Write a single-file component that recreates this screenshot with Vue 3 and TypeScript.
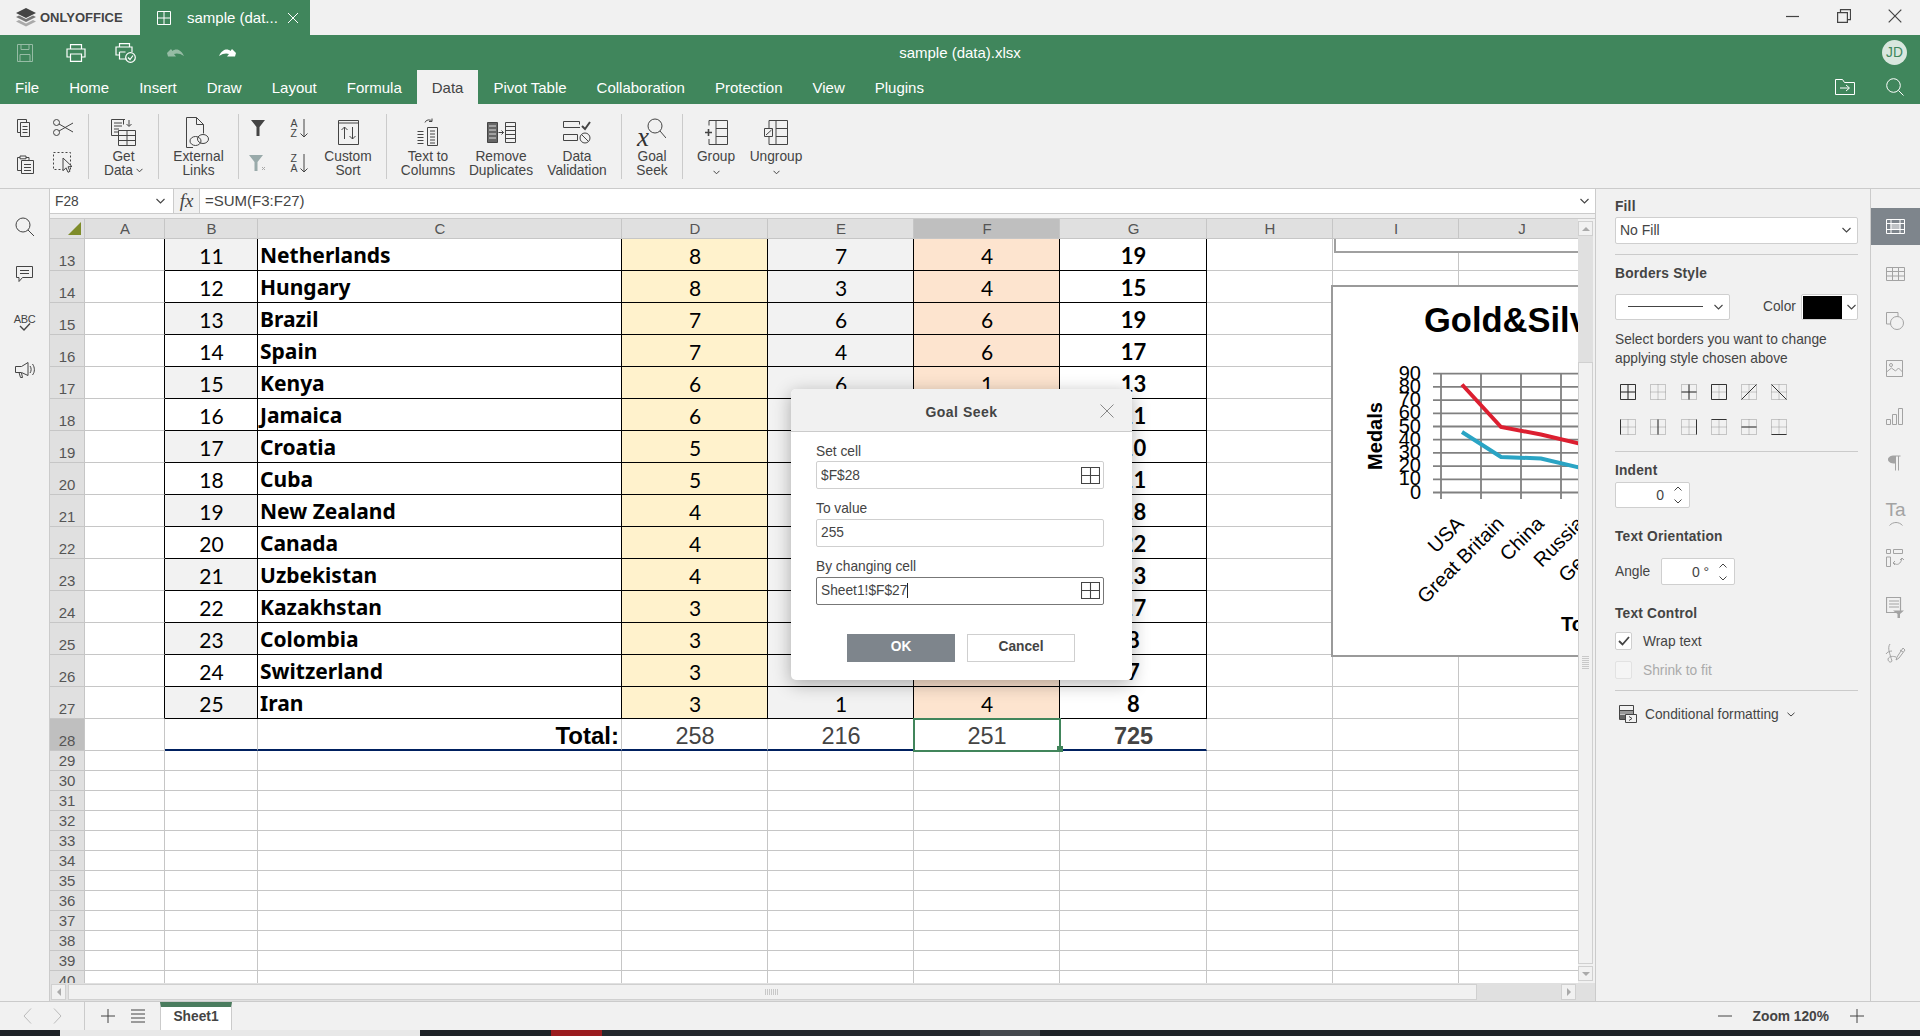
<script setup lang="ts">
interface Row { n: number; rank: number; name: string; d: number; e: number; f: number; g: number }
const names: [string, number, number, number][] = [
  ['Netherlands', 8, 7, 4], ['Hungary', 8, 3, 4], ['Brazil', 7, 6, 6], ['Spain', 7, 4, 6], ['Kenya', 6, 6, 1],
  ['Jamaica', 6, 3, 2], ['Croatia', 5, 3, 2], ['Cuba', 5, 2, 4], ['New Zealand', 4, 9, 5], ['Canada', 4, 3, 15],
  ['Uzbekistan', 4, 2, 7], ['Kazakhstan', 3, 5, 9], ['Colombia', 3, 2, 3], ['Switzerland', 3, 2, 2], ['Iran', 3, 1, 4],
]
const rows: Row[] = names.map((x, i) => ({ n: 13 + i, rank: 11 + i, name: x[0], d: x[1], e: x[2], f: x[3], g: x[1] + x[2] + x[3] }))
const cols = ['A', 'B', 'C', 'D', 'E', 'F', 'G', 'H', 'I', 'J']
const emptyRows = [29, 30, 31, 32, 33, 34, 35, 36, 37, 38, 39, 40]
const menu = ['File', 'Home', 'Insert', 'Draw', 'Layout', 'Formula', 'Data', 'Pivot Table', 'Collaboration', 'Protection', 'View', 'Plugins']
const borderIcons = [
  'M.5.5h15v15H.5zM8 .5v15M.5 8h15', '', 'M8 .5v15M.5 8h15', 'M.5.5h15v15H.5z', 'M.5 15.5l15-15', 'M.5.5l15 15',
  'M.5.5v15', 'M8 .5v15', 'M15.5.5v15', 'M.5.5h15', 'M.5 8h15', 'M.5 15.5h15',
]
const axis = [90, 80, 70, 60, 50, 40, 30, 20, 10, 0]
const axisY = (i: number) => 372.7 + i * 13.2
const countries = ['USA', 'Great Britain', 'China', 'Russia', 'Germany']
</script>

<template>
  <div class="app">
    <!-- title bar -->
    <div class="titlebar">
      <div class="brand">
        <svg class="logo" width="20" height="19" viewBox="0 0 20 19">
          <path d="M10 0l10 5-10 5L0 5z" fill="#444" />
          <path d="M0 9l3-1.5 7 3.5 7-3.5 3 1.5-10 5z" fill="#777" />
          <path d="M0 13.5L3 12l7 3.5 7-3.5 3 1.5-10 5z" fill="#aaa" />
        </svg>
        <span class="brand-text">ONLYOFFICE</span>
      </div>
      <div class="doc-tab">
        <svg width="14" height="14" viewBox="0 0 14 14" fill="none" stroke="#fff"><path d="M.5.5h13v13H.5zM7 .5v13M.5 7h13" /></svg>
        <span class="doc-tab-name">sample (dat...</span>
        <svg width="12" height="12" viewBox="0 0 12 12" fill="none" stroke="#fff"><path d="M1 1l10 10M11 1L1 11" /></svg>
      </div>
      <div class="spacer"></div>
      <div class="win">
        <svg width="14" height="14" viewBox="0 0 14 14" stroke="#444" fill="none"><path d="M0 7.5h13" stroke-width="1.2" /></svg>
        <svg width="14" height="14" viewBox="0 0 14 14" stroke="#444" fill="none" stroke-width="1.2"><path d="M.6 3.6h9.8v9.8H.6zM3.5 3.5V.6h10v10h-3" /></svg>
        <svg width="14" height="14" viewBox="0 0 14 14" stroke="#444" fill="none" stroke-width="1.2"><path d="M.7.7l12.6 12.6M13.3.7L.7 13.3" /></svg>
      </div>
    </div>

    <!-- green header -->
    <div class="header">
      <div class="quick">
        <div class="quick-icons">
          <svg class="dim" width="16" height="18" viewBox="0 0 16 18" fill="none" stroke="#fff"><path d="M.5.5h15v17H.5zM4 .5v5h8v-5M3 17.5v-7h10v7" /></svg>
          <svg width="20" height="18" viewBox="0 0 20 18" fill="none" stroke="#fff" stroke-width="1.2"><path d="M4.5 5V.6h11V5M4.5 13H1V5h18v8h-3.500M4.500 10h11v7.400h-11z" /></svg>
          <svg width="21" height="20" viewBox="0 0 21 20" fill="none" stroke="#fff" stroke-width="1.2"><path d="M4.500 4V.6h10V4M4.500 12H1V4h16v5M4.500 9h6M4.500 9v7h7" /><circle cx="15.500" cy="14.500" r="4.800" /><path d="M13 14.500l2 2 3-4" /></svg>
          <svg class="dim" width="18" height="10" viewBox="0 0 18 10" fill="#fff"><path d="M0 5l4-4 1.500 2C8 1 13 0 17 8 13 5 9 5 7 6l2 2.500H1z" /></svg>
          <svg width="18" height="10" viewBox="0 0 18 10" fill="#fff"><path d="M18 5l-4-4-1.500 2C10 1 5 0 1 8c4-3 8-3 10-2L9 8.500h8z" /></svg>
        </div>
        <div class="doc-title">sample (data).xlsx</div>
        <div class="avatar">JD</div>
      </div>
      <div class="menu">
        <div v-for="m in menu" :key="m" class="menu-item" :class="{ active: m === 'Data' }">{{ m }}</div>
        <div class="spacer"></div>
        <svg class="menu-folder" width="20" height="16" viewBox="0 0 20 16" fill="none" stroke="#fff"><path d="M.5 15.500V.5h7l2 3h10v12zM5 9h9M11 6l3.500 3L11 12" /></svg>
        <svg class="menu-search" width="18" height="18" viewBox="0 0 18 18" fill="none" stroke="#fff"><circle cx="7.500" cy="7.500" r="6.800" /><path d="M12.500 12.500l5 5" /></svg>
      </div>
    </div>

    <!-- toolbar -->
    <div class="toolbar">
      <div class="tg g1">
        <div class="small-col">
          <svg width="17" height="18" viewBox="0 0 17 18" fill="none" stroke="#444"><path d="M3.500 13.500H.5V.5h9v3M3.500 3.500h9v14h-9zM5.500 7.500h5M5.500 10.500h5M5.500 13.500h5" /></svg>
          <svg width="17" height="19" viewBox="0 0 17 19" fill="none" stroke="#444"><path d="M4 15.500H.5V2.500H3M9 2.500h3V5M4.500 5.500h12v13h-12zM3 1h6v2.800H3zM7 9.500h7M7 12.500h7M7 15.500h7" /></svg>
        </div>
        <div class="small-col c2">
          <svg width="20" height="17" viewBox="0 0 20 17" fill="none" stroke="#444"><circle cx="3.500" cy="3.500" r="3" /><circle cx="3.500" cy="13.500" r="3" /><path d="M6 5l14 8M6 12L20 4" /></svg>
          <svg width="20" height="22" viewBox="0 0 20 22" fill="none" stroke="#444"><path d="M.5.5h17v17H.5z" stroke-dasharray="2 2" /><path d="M10 6l9 8.500-4 .3 2 4.500-2 1-2-4.500-3 3z" fill="#f1f1f1" /></svg>
        </div>
      </div>
      <div class="tg g2">
        <div class="big">
          <div class="ic">
            <svg width="25" height="27" viewBox="0 0 25 27" fill="none" stroke="#444"><path d="M8.500 16.500h-8V.5h12v5M3 4h8M3 7h8M3 10h5M3 13h5M18 1v6M15.500 5L18 7.500 20.500 5M10 .5h4" /><path d="M7.500 11.500h17v15h-17zM7.500 16.500h17M7.500 21.500h17M16 11.500v15" /></svg>
          </div>
          <div class="lbl">Get<br />Data<span class="chev-in"><svg width="7" height="5" viewBox="0 0 7 5" fill="none" stroke="#444"><path d="M.5.8L3.500 3.800 6.500.8" /></svg></span></div>
        </div>
      </div>
      <div class="tg g3">
        <div class="big">
          <div class="ic">
            <svg width="24" height="31" viewBox="0 0 24 31" fill="none" stroke="#444"><path d="M7 30.500H.5V.5h10l7 7v9M10.500.5v7h7" /><ellipse cx="9.500" cy="24" rx="5.500" ry="4.500" /><ellipse cx="17" cy="22" rx="5.500" ry="4.500" /></svg>
          </div>
          <div class="lbl">External<br />Links</div>
        </div>
      </div>
      <div class="tg g4">
        <div class="small-col sc-f">
          <svg width="14" height="16" viewBox="0 0 14 16" fill="#444"><path d="M0 0h14L8.500 7v9h-3V7z" /></svg>
          <svg width="18" height="16" viewBox="0 0 18 16" fill="#9aa"><path d="M0 0h14L8.500 7v9h-3V7z" /><path d="M13 12l3 3M16 12l-3 3" stroke="#aaa" fill="none" /></svg>
        </div>
        <div class="small-col sc-s">
          <div class="sort"><div class="az"><span>A</span><span>Z</span></div><svg width="8" height="19" viewBox="0 0 8 19" fill="none" stroke="#444"><path d="M4 0v18M.5 14.500L4 18l3.500-3.500" /></svg></div>
          <div class="sort"><div class="az"><span>Z</span><span>A</span></div><svg width="8" height="19" viewBox="0 0 8 19" fill="none" stroke="#444"><path d="M4 0v18M.5 14.500L4 18l3.500-3.500" /></svg></div>
        </div>
        <div class="big w-sort">
          <div class="ic">
            <svg width="21" height="25" viewBox="0 0 21 25" fill="none" stroke="#444"><path d="M.5 3V24.500h20V.5H.5v2.500h20M6.500 19V7M3.500 10l3-3 3 3M14.500 7v12M11.500 16l3 3 3-3" /></svg>
          </div>
          <div class="lbl">Custom<br />Sort</div>
        </div>
      </div>
      <div class="tg g5">
        <div class="big w-ttc">
          <div class="ic">
            <svg width="22" height="28" viewBox="0 0 22 28" fill="none" stroke="#444"><path d="M8 4.500a4 4 0 0 1 7 -1M15 .5v3h-3M.5 13.500h6M.5 16.500h6M.5 19.500h6M.5 22.500h6M.5 25.500h6" /><path d="M10.500 9.500h10v18h-10zM13 13h5M13 16h5M13 19h5M13 22h5M13 25h5" /></svg>
          </div>
          <div class="lbl">Text to<br />Columns</div>
        </div>
        <div class="big w-rd">
          <div class="ic">
            <svg width="29" height="21" viewBox="0 0 29 21" fill="none" stroke="#444"><path d="M.5.5h10v20H.5z" fill="#666" /><path d="M2 4h7M2 8h7M2 12h7M2 16h7" stroke="#ddd" /><path d="M18.500.5h10v20h-10zM18.500 4.500h10M18.500 8.500h10M18.500 12.500h10M18.500 16.500h10M11.500 10.500h5M14.500 8.500l2 2-2 2" /></svg>
          </div>
          <div class="lbl">Remove<br />Duplicates</div>
        </div>
        <div class="big w-dv">
          <div class="ic">
            <svg width="28" height="23" viewBox="0 0 28 23" fill="none" stroke="#444"><path d="M17 6.500H.5v-6h16v3M.5 13.500h14v6H.5z" /><path d="M19 5l3 3 5-7" stroke-width="2" /><circle cx="22" cy="17" r="5" /><path d="M18.500 13.500l7 7" /></svg>
          </div>
          <div class="lbl">Data<br />Validation</div>
        </div>
      </div>
      <div class="tg g6">
        <div class="big">
          <div class="ic goal">
            <span class="goal-x">x</span>
            <svg width="20" height="22" viewBox="0 0 20 22" fill="none" stroke="#444"><circle cx="9" cy="8" r="7" /><path d="M14 13l6 7" /></svg>
          </div>
          <div class="lbl">Goal<br />Seek</div>
        </div>
      </div>
      <div class="tg g7">
        <div class="big w-grp">
          <div class="ic">
            <svg width="24" height="25" viewBox="0 0 24 25" fill="none" stroke="#444"><path d="M12 .5h11.500v24H12zM12 8.500h11.500M12 16.500h11.500M5 .5h7M5 24.500h7M5 .5v5M5 19v5.500" /><path d="M1 12.500h7M4.500 9v7" stroke-width="1.600" /></svg>
          </div>
          <div class="lbl">Group<div class="chev-line"><svg width="7" height="5" viewBox="0 0 7 5" fill="none" stroke="#444"><path d="M.5.8L3.500 3.800 6.500.8" /></svg></div></div>
        </div>
        <div class="big w-ung">
          <div class="ic">
            <svg width="24" height="25" viewBox="0 0 24 25" fill="none" stroke="#444"><path d="M12 .5h11.500v24H12zM12 8.500h11.500M12 16.500h11.500M5 .5h7M5 24.500h7M5 .5v8M5 16v8.500" /><path d="M.5 8.500h8v8h-8zM2 15L7.500 10" /></svg>
          </div>
          <div class="lbl">Ungroup<div class="chev-line"><svg width="7" height="5" viewBox="0 0 7 5" fill="none" stroke="#444"><path d="M.5.8L3.500 3.800 6.500.8" /></svg></div></div>
        </div>
      </div>
    </div>

    <!-- main -->
    <div class="main">
      <div class="left-strip">
        <svg width="20" height="20" viewBox="0 0 20 20" fill="none" stroke="#444"><circle cx="8" cy="8" r="7" /><path d="M13 13l6 6" /></svg>
        <svg class="ls2" width="18" height="17" viewBox="0 0 18 17" fill="none" stroke="#444"><path d="M.5.5h16v11H6.500L3 15.500v-4H.5zM4 4.500h9M4 7.500h9" /></svg>
        <div class="abc ls3"><span>ABC</span><svg width="12" height="9" viewBox="0 0 12 9" fill="none" stroke="#444" stroke-width="1.400"><path d="M1 3l4 4 6-6.500" /></svg></div>
        <svg class="ls4" width="20" height="16" viewBox="0 0 20 16" fill="none" stroke="#444"><path d="M.5 4.500h6L13 .5v13l-6.500-3H.5zM4 10.500l1.500 5h2L6.500 11M15 4c1.500 2 1.500 5 0 7M17.500 2c2.500 3.500 2.500 8 0 11" /></svg>
      </div>

      <div class="center">
        <div class="formula">
          <div class="namebox">
            <span>F28</span>
            <svg width="9" height="6" viewBox="0 0 9 6" fill="none" stroke="#444" stroke-width="1.100"><path d="M.5 1l4 4 4-4" /></svg>
          </div>
          <div class="fx">fx</div>
          <div class="finput">=SUM(F3:F27)</div>
          <svg class="fchev" width="9" height="6" viewBox="0 0 9 6" fill="none" stroke="#444" stroke-width="1.100"><path d="M.5 1l4 4 4-4" /></svg>
        </div>
        <div class="fgap"></div>
        <div class="sheet-row">
          <div class="sheet">
            <div class="grid">
              <div class="hd corner"><i class="tri"></i></div>
              <div v-for="c in cols" :key="c" class="hd col" :class="{ sel: c === 'F' }">{{ c }}</div>

              <template v-for="r in rows" :key="r.n">
                <div class="hd rowh tall">{{ r.n }}</div>
                <div class="cell bk-r"></div>
                <div class="cell tb num" :class="{ zebra: r.rank % 2 === 1 }">{{ r.rank }}</div>
                <div class="cell tb name">{{ r.name }}</div>
                <div class="cell tb num gold">{{ r.d }}</div>
                <div class="cell tb num zebra">{{ r.e }}</div>
                <div class="cell tb num bronze">{{ r.f }}</div>
                <div class="cell tb num strong">{{ r.g }}</div>
                <div class="cell"></div>
                <div class="cell"></div>
                <div class="cell"></div>
              </template>

              <div class="hd rowh tall sel">28</div>
              <div class="cell"></div>
              <div class="cell tot"></div>
              <div class="cell tot total-label">Total:</div>
              <div class="cell tot totnum">258</div>
              <div class="cell tot totnum">216</div>
              <div class="cell tot totnum active-cell">251<i class="handle"></i></div>
              <div class="cell tot totnum tbold">725</div>
              <div class="cell"></div>
              <div class="cell"></div>
              <div class="cell"></div>

              <template v-for="n in emptyRows" :key="n">
                <div class="hd rowh">{{ n }}</div>
                <div v-for="c in cols" :key="c" class="cell"></div>
              </template>
            </div>

            <div class="obj-top"></div>
            <div class="chart">
              <svg width="400" height="372" viewBox="1332 285 400 372">
                <text x="1424" y="331" class="c-title">Gold&amp;Silver</text>
                <text transform="rotate(-90 1382 435)" x="1382" y="435" text-anchor="middle" class="c-bold">Medals</text>
                <g stroke="#808080" stroke-width="1.800" fill="none">
                  <path v-for="(a, i) in axis" :key="a" :d="`M1433 ${axisY(i)}H1740`" />
                  <path d="M1441 372V498M1481 372V498M1521 372V498M1561 372V498M1601 372V498" />
                </g>
                <text v-for="(a, i) in axis" :key="'t' + a" :x="1421" :y="axisY(i) + 6" text-anchor="end" class="c-axis">{{ a }}</text>
                <path d="M1462 383.500L1501 426 1541 433.500 1581 443" fill="none" stroke="#dc1f30" stroke-width="4" />
                <path d="M1462 431L1501 456 1541 457.500 1581 467" fill="none" stroke="#2aa4c4" stroke-width="4" />
                <text v-for="(c, i) in countries" :key="c" :transform="`rotate(-45 ${1465 + i * 40} 524)`" :x="1465 + i * 40" y="524" text-anchor="end" class="c-axis">{{ c }}</text>
                <text x="1561" y="630" class="c-bold">Total</text>
              </svg>
            </div>
          </div>
          <div class="vscroll">
            <div class="sb-btn up"><i class="arr-up"></i></div>
            <div class="vtrack"></div>
            <div class="vthumb"><i class="vgrip"></i></div>
            <div class="sb-btn down"><i class="arr-down"></i></div>
          </div>
        </div>
        <div class="hscroll">
          <div class="sb-btn h"><i class="arr-left"></i></div>
          <div class="hthumb"><i class="hgrip"></i></div>
          <div class="htrack"></div>
          <div class="sb-btn h"><i class="arr-right"></i></div>
        </div>
      </div>

      <div class="panel">
        <div class="plabel mt9">Fill</div>
        <div class="pselect fill-sel mt1"><span>No Fill</span><svg width="9" height="6" viewBox="0 0 9 6" fill="none" stroke="#444" stroke-width="1.100"><path d="M.5 1l4 4 4-4" /></svg></div>
        <div class="pdiv mt10"></div>
        <div class="plabel mt10">Borders Style</div>
        <div class="bstyle-row mt11">
          <div class="pselect border-sel"><i class="line"></i><svg width="9" height="6" viewBox="0 0 9 6" fill="none" stroke="#444" stroke-width="1.100"><path d="M.5 1l4 4 4-4" /></svg></div>
          <span class="color-lbl">Color</span>
          <div class="color-btn"><i class="swatch"></i><svg width="9" height="6" viewBox="0 0 9 6" fill="none" stroke="#444" stroke-width="1.100"><path d="M.5 1l4 4 4-4" /></svg></div>
        </div>
        <div class="ptext mt10">Select borders you want to change<br />applying style chosen above</div>
        <div class="bicons mt16">
          <svg v-for="(d, i) in borderIcons" :key="i" width="16" height="16" viewBox="0 0 16 16" fill="none">
            <path d="M.5.5h15v15H.5zM8 .5v15M.5 8h15" stroke="#999" stroke-dasharray="1 1" />
            <path v-if="d" :d="d" stroke="#333" />
          </svg>
        </div>
        <div class="pdiv mt16"></div>
        <div class="plabel mt10">Indent</div>
        <div class="spin indent mt2"><span>0</span><div class="spin-btns"><svg width="8" height="5" viewBox="0 0 8 5" fill="none" stroke="#444"><path d="M.5 4.500L4 1l3.500 3.500" /></svg><svg width="8" height="5" viewBox="0 0 8 5" fill="none" stroke="#444"><path d="M.5.500L4 4l3.500-3.500" /></svg></div></div>
        <div class="plabel mt20">Text Orientation</div>
        <div class="angle-row mt12">
          <span>Angle</span>
          <div class="spin angle"><span>0 °</span><div class="spin-btns"><svg width="8" height="5" viewBox="0 0 8 5" fill="none" stroke="#444"><path d="M.5 4.500L4 1l3.500 3.500" /></svg><svg width="8" height="5" viewBox="0 0 8 5" fill="none" stroke="#444"><path d="M.5.500L4 4l3.500-3.500" /></svg></div></div>
        </div>
        <div class="plabel mt20">Text Control</div>
        <div class="chk-row mt9"><div class="chk"><svg width="12" height="10" viewBox="0 0 12 10" fill="none" stroke="#444" stroke-width="1.800"><path d="M1 5l3.500 3.500L11 1" /></svg></div><span>Wrap text</span></div>
        <div class="chk-row mt11 off"><div class="chk"></div><span>Shrink to fit</span></div>
        <div class="pdiv mt11"></div>
        <div class="cond mt14">
          <svg width="18" height="18" viewBox="0 0 18 18" fill="none" stroke="#444"><path d="M.5.5h14v14H.5z" /><path d="M.5 5.500h14" /><path d="M1 6h13v3.500H1z" fill="#999" stroke="none" /><path d="M1 10h6v4H1z" fill="#666" stroke="none" /><path d="M6.500 9.500h11v8h-11z" fill="#f1f1f1" /><path d="M10 11.500l3 2-3 2" /></svg>
          <span>Conditional formatting</span>
          <svg width="8" height="5" viewBox="0 0 8 5" fill="none" stroke="#444"><path d="M.5.800L4 4 7.500.800" /></svg>
        </div>
      </div>

      <div class="right-strip">
        <div class="rs-active">
          <svg width="19" height="15" viewBox="0 0 19 15" fill="none" stroke="#fff"><path d="M.5.5h18v14H.5zM.5 4.500h18M.5 10.500h18M5 .5v14M14 .5v14" /><path d="M5 4.500h9v6H5z" fill="#fff" opacity=".5" /></svg>
        </div>
        <svg class="rs r1" width="19" height="14" viewBox="0 0 19 14" fill="none" stroke="#a3a3a3"><path d="M.5.5h18v13H.5zM.5 4.500h18M.5 9h18M6.500 .5v13M12.500 .5v13" /></svg>
        <svg class="rs r2" width="18" height="18" viewBox="0 0 18 18" fill="none" stroke="#a3a3a3"><path d="M6 12H.5V.5H12V5" /><circle cx="11" cy="11" r="6.500" fill="#f1f1f1" /></svg>
        <svg class="rs r3" width="17" height="17" viewBox="0 0 17 17" fill="none" stroke="#a3a3a3"><path d="M.5.5h16v16H.5zM.5 12l5-4 4 3 3-3 4 4" /><circle cx="5" cy="5" r="1.500" /></svg>
        <svg class="rs r4" width="17" height="17" viewBox="0 0 17 17" fill="none" stroke="#a3a3a3"><path d="M.5 11.500h4v5h-4zM6.500 6.500h4v10h-4zM12.500.5h4v16h-4z" /></svg>
        <svg class="rs r5" width="13" height="16" viewBox="0 0 13 16" fill="#a3a3a3"><path d="M6 .5H12.500v1H11V15.500h-1V1.500H8V15.500H7V8.500C3 8.500 0 7 0 4.500S3 .5 6 .5z" /></svg>
        <div class="rs r6 ta"><span>Ta</span><svg width="14" height="5" viewBox="0 0 14 5" fill="none" stroke="#a3a3a3"><path d="M.5 4.500C4 .5 10 .5 13.500 4.500" /></svg></div>
        <svg class="rs r7" width="18" height="18" viewBox="0 0 18 18" fill="none" stroke="#a3a3a3"><path d="M.5.5h4v4h-4zM7.500.5h9v4h-9zM.5 8h4v9.500h-4zM8 14c3 3 7 1 8-5M14 11l2-2 2 2M9 12l-2 2 2 2" /></svg>
        <svg class="rs r8" width="18" height="21" viewBox="0 0 18 21" fill="none" stroke="#a3a3a3"><path d="M.5.500h14v15H.5zM3 4h10M3 7h10M3 10h10" stroke-width="1.200" /><path d="M7 13.500h11L14 17v4h-2.500v-4z" fill="#a3a3a3" stroke="none" /></svg>
        <svg class="rs r9" width="21" height="21" viewBox="0 0 21 21" fill="none" stroke="#a3a3a3"><path d="M5 1c-3 4 0 10 2 17-1 2-4 1-4-2 1-3 5-3 8-2M7 8c-2 0-5 1-6 3M18 5l2 2-6 8-3 2 1-3zM15 7l3 2" /></svg>
      </div>
    </div>

    <!-- status -->
    <div class="status">
      <div class="nav">
        <svg width="9" height="16" viewBox="0 0 9 16" fill="none" stroke="#bbb"><path d="M8 .5L1 8l7 7.500" /></svg>
        <svg width="9" height="16" viewBox="0 0 9 16" fill="none" stroke="#bbb"><path d="M1 .5L8 8l-7 7.500" /></svg>
      </div>
      <div class="sheet-actions">
        <svg width="14" height="14" viewBox="0 0 14 14" fill="none" stroke="#444"><path d="M7 0v14M0 7h14" /></svg>
        <svg width="14" height="14" viewBox="0 0 14 14" fill="none" stroke="#444"><path d="M0 1h14M0 5h14M0 9h14M0 13h14" /></svg>
      </div>
      <div class="sheet-tab">Sheet1</div>
      <div class="spacer"></div>
      <svg class="zm" width="14" height="14" viewBox="0 0 14 14" fill="none" stroke="#444"><path d="M0 7h14" /></svg>
      <div class="zoom-text">Zoom 120%</div>
      <svg class="zp" width="14" height="14" viewBox="0 0 14 14" fill="none" stroke="#444"><path d="M7 0v14M0 7h14" /></svg>
    </div>

    <!-- os taskbar strip -->
    <div class="taskbar">
      <i class="tk t1"></i><i class="tk t2"></i><i class="tk t3"></i><i class="tk t4"></i><i class="tk t5"></i><i class="tk t6"></i><i class="tk t7"></i>
    </div>

    <!-- dialog -->
    <div class="dialog">
      <div class="dlg-head">
        <span>Goal Seek</span>
        <svg class="dlg-x" width="14" height="14" viewBox="0 0 14 14" fill="none" stroke="#888"><path d="M.5.500l13 13M13.500.500l-13 13" /></svg>
      </div>
      <div class="dlg-body">
        <div class="dlbl">Set cell</div>
        <div class="dinput first"><span>$F$28</span><svg width="19" height="17" viewBox="0 0 19 17" fill="none" stroke="#444" stroke-width="1.100"><path d="M.5.500h18v16H.5zM9.500 .5v16M.5 8.500h18" /></svg></div>
        <div class="dlbl">To value</div>
        <div class="dinput"><span>255</span></div>
        <div class="dlbl">By changing cell</div>
        <div class="dinput focus"><span>Sheet1!$F$27<i class="caret"></i></span><svg width="19" height="17" viewBox="0 0 19 17" fill="none" stroke="#444" stroke-width="1.100"><path d="M.5.500h18v16H.5zM9.500 .5v16M.5 8.500h18" /></svg></div>
        <div class="dbtns">
          <div class="btn ok">OK</div>
          <div class="btn cancel">Cancel</div>
        </div>
      </div>
    </div>
  </div>
</template>

<style>
html, body { margin: 0; padding: 0; background: #f1f1f1; overflow: hidden; }
</style>

<style scoped>
.app { position: relative; width: 1920px; height: 1036px; overflow: hidden; display: flex; flex-direction: column; background: #f1f1f1; color: #444; font-family: "Liberation Sans", Arial, sans-serif; font-size: 13.75px; }
.spacer { flex: 1; }
svg { display: block; flex: none; }

.titlebar { height: 35px; flex: none; display: flex; background: #f1f1f1; }
.brand { width: 140px; display: flex; align-items: center; padding-left: 16px; box-sizing: border-box; }
.logo { margin-right: 4px; }
.brand-text { font-weight: 700; font-size: 13px; color: #444; }
.doc-tab { width: 170px; background: #40865c; color: #fff; display: flex; align-items: center; padding-left: 17px; box-sizing: border-box; }
.doc-tab-name { font-size: 15px; margin-left: 16px; width: 100px; white-space: nowrap; }
.win { display: flex; align-items: center; gap: 37px; padding-right: 18px; padding-bottom: 4px; }

.header { height: 69px; flex: none; background: #40865c; color: #fff; display: flex; flex-direction: column; }
.quick { height: 35px; position: relative; display: flex; align-items: center; }
.quick-icons { display: flex; align-items: center; padding-left: 17px; }
.quick-icons svg:nth-child(1) { margin-right: 33px; }
.quick-icons svg:nth-child(2) { margin-right: 29px; }
.quick-icons svg:nth-child(3) { margin-right: 31px; }
.quick-icons svg:nth-child(4) { margin-right: 33px; }
.dim { opacity: .45; }
.doc-title { position: absolute; left: 0; right: 0; text-align: center; font-size: 15px; }
.avatar { position: absolute; right: 13px; top: 5px; width: 25px; height: 25px; border-radius: 50%; background: #d9e7de; color: #40865c; font-size: 13.75px; line-height: 25px; text-align: center; }
.menu { height: 34px; display: flex; align-items: stretch; }
.menu-item { padding: 0 15px; font-size: 15px; line-height: 35px; }
.menu-item.active { background: #f1f1f1; color: #444; }
.menu-folder { align-self: center; margin-right: 31px; }
.menu-search { align-self: center; margin-right: 16px; }

.toolbar { height: 85px; box-sizing: border-box; flex: none; display: flex; padding: 10px 0 9px; border-bottom: 1px solid #cbcbcb; background: #f1f1f1; }
.tg { display: flex; box-sizing: border-box; border-right: 1px solid #cbcbcb; height: 65px; }
.g1 { width: 89px; padding-left: 17px; }
.g2 { width: 70px; justify-content: center; }
.g3 { width: 80px; justify-content: center; }
.g4 { width: 148px; }
.g5 { width: 235px; }
.g6 { width: 61px; justify-content: center; }
.g7 { border-right: none; }
.small-col { display: flex; flex-direction: column; align-items: center; justify-content: space-between; height: 60px; padding-top: 5px; box-sizing: border-box; width: 17px; }
.c2 { margin-left: 19px; width: 20px; }
.sc-f { margin-left: 12px; width: 14px; height: 57px; padding-top: 6px; }
.sc-s { margin-left: 24px; width: 20px; height: 59px; padding-top: 4px; }
.sort { display: flex; align-items: center; gap: 2px; }
.az { display: flex; flex-direction: column; font-size: 10.5px; line-height: 10px; font-weight: 400; }
.big { display: flex; flex-direction: column; align-items: center; }
.ic { height: 36px; display: flex; align-items: center; justify-content: center; }
.lbl { font-size: 13.75px; line-height: 14px; text-align: center; white-space: nowrap; margin-top: 0; }
.chev-in { display: inline-block; margin-left: 3px; vertical-align: 2px; }
.chev-line { display: flex; justify-content: center; padding-top: 6px; }
.w-sort { width: 62px; margin-left: 8px; }
.w-ttc { width: 82px; }
.w-rd { width: 64px; }
.w-dv { width: 88px; }
.goal { position: relative; width: 40px; }
.goal svg { position: absolute; left: 14px; top: 4px; }
.goal-x { position: absolute; left: 5px; top: 11px; font-family: "Liberation Serif", serif; font-style: italic; font-size: 27px; line-height: 24px; color: #333; }
.w-grp { width: 62px; margin-left: 2px; }
.w-ung { width: 58px; }

.main { flex: 1; min-height: 0; display: flex; }
.left-strip { width: 49px; flex: none; border-right: 1px solid #cbcbcb; display: flex; flex-direction: column; align-items: center; padding-top: 28px; box-sizing: content-box; }
.ls2 { margin-top: 29px; }
.ls3 { margin-top: 31px; }
.ls4 { margin-top: 30px; }
.abc { display: flex; flex-direction: column; align-items: center; font-size: 11px; line-height: 11px; letter-spacing: -.3px; }
.abc svg { margin-top: -2px; }
.center { width: 1545px; flex: none; display: flex; flex-direction: column; }
.formula { height: 25px; flex: none; box-sizing: border-box; background: #fff; display: flex; align-items: center; border-bottom: 1px solid #cbcbcb; position: relative; }
.namebox { width: 124px; height: 100%; box-sizing: border-box; display: flex; align-items: center; justify-content: space-between; padding: 0 8px 0 5px; font-size: 13.75px; border-right: 1px solid #cbcbcb; }
.fx { width: 26px; height: 100%; box-sizing: border-box; background: #f1f1f1; border-right: 1px solid #cbcbcb; font-family: "Liberation Serif", serif; font-style: italic; font-size: 19px; line-height: 23px; text-align: center; color: #444; }
.finput { font-size: 15px; padding-left: 5px; padding-bottom: 2px; }
.fchev { position: absolute; right: 6px; top: 9px; }
.fgap { height: 5px; flex: none; box-sizing: border-box; background: #f1f1f1; border-bottom: 1px solid #cbcbcb; }
.sheet-row { height: 764px; flex: none; display: flex; }
.sheet { width: 1528px; flex: none; position: relative; overflow: hidden; background: #fff; }
.grid { display: grid; grid-template-columns: 35px 80px 93px 364px 146px 146px 146px 147px 126px 126px 126px; grid-template-rows: 20px repeat(16, 32px) repeat(12, 20px); width: 1535px; }
.hd { background: #e0e0e0; color: #555; box-sizing: border-box; border-right: 1px solid #c6c6c6; border-bottom: 1px solid #c6c6c6; font-size: 15px; text-align: center; line-height: 19px; }
.hd.col { padding-left: 1px; }
.hd.sel { background: #bfbfbf; }
.corner { position: relative; }
.tri { position: absolute; right: 3px; bottom: 3px; width: 0; height: 0; border-style: solid; border-width: 0 0 13px 13px; border-color: transparent transparent #7f8c2a transparent; }
.rowh.tall { display: flex; align-items: flex-end; justify-content: center; line-height: 19px; }
.cell { box-sizing: border-box; border-right: 1px solid #c6c6c6; border-bottom: 1px solid #c6c6c6; background: #fff; color: #000; display: flex; align-items: center; }
.bk-r { border-right-color: #000; }
.tb { border-right-color: #000; border-bottom-color: #000; }
.num { justify-content: center; font-family: Lato, "Liberation Sans", sans-serif; font-size: 21px; padding-top: 1px; padding-left: 1px; }
.name { font-family: "Noto Sans", "Liberation Sans", sans-serif; font-weight: 700; font-size: 21px; padding-left: 2px; white-space: nowrap; padding-top: 1px; }
.strong { font-weight: 700; font-size: 22px; }
.zebra { background: #f2f2f2; }
.gold { background: #fff2cc; }
.bronze { background: #fde4cf; }
.tot { border-bottom: 2px solid #002060; }
.total-label { justify-content: flex-end; padding-right: 2px; padding-top: 3px; font-weight: 700; font-size: 24px; }
.totnum { justify-content: center; font-size: 23.5px; color: #444; padding-top: 4px; padding-left: 1px; }
.tbold { font-weight: 700; }
.active-cell { position: relative; overflow: visible; outline: 2px solid #41855b; outline-offset: -1px; border-color: transparent; z-index: 2; }
.handle { position: absolute; right: -4px; bottom: -3px; width: 6px; height: 6px; background: #41855b; }

.obj-top { position: absolute; left: 1284px; top: 20px; width: 400px; height: 14px; box-sizing: border-box; border: 2px solid #a0a0a0; border-top: none; background: #fff; }
.chart { position: absolute; left: 1281px; top: 66px; width: 400px; height: 372px; box-sizing: border-box; background: #fff; border: 2px solid #9a9a9a; overflow: hidden; }
.chart svg { margin: -1px -2px -2px -1px; }
.c-title { font-family: "Liberation Sans", sans-serif; font-weight: 700; font-size: 34.5px; fill: #000; }
.c-bold { font-family: "Liberation Sans", sans-serif; font-weight: 700; font-size: 20px; fill: #000; }
.c-axis { font-family: "Liberation Sans", sans-serif; font-size: 20px; fill: #000; }

.vscroll { width: 17px; flex: none; display: flex; flex-direction: column; align-items: flex-start; background: #f1f1f1; }
.sb-btn { width: 15px; height: 15px; box-sizing: border-box; border: 1px solid #d0d0d0; background: #f1f1f1; display: flex; align-items: center; justify-content: center; flex: none; }
.sb-btn.up { margin-top: 2px; }
.sb-btn.down { margin-top: 2px; }
.vtrack { width: 15px; height: 126px; background: #e0e0e0; flex: none; }
.vthumb { width: 15px; height: 602px; box-sizing: border-box; border: 1px solid #d0d0d0; background: #f1f1f1; position: relative; flex: none; }
.vgrip { position: absolute; left: 3px; right: 3px; top: 293px; height: 13px; background: repeating-linear-gradient(#c8c8c8 0 1px, transparent 1px 2px); }
.hscroll { height: 18px; flex: none; display: flex; align-items: flex-start; background: #e0e0e0; padding: 1px 19px 0 1px; box-sizing: border-box; }
.sb-btn.h { width: 15px; height: 16px; }
.hthumb { width: 1409px; height: 16px; margin-left: 2px; box-sizing: border-box; border: 1px solid #d0d0d0; background: #f1f1f1; position: relative; }
.hgrip { position: absolute; left: 696px; top: 4px; bottom: 4px; width: 13px; background: repeating-linear-gradient(90deg, #c8c8c8 0 1px, transparent 1px 2px); }
.htrack { flex: 1; }
.arr-up { width: 0; height: 0; border: 4px solid transparent; border-top: 0; border-bottom: 4px solid #aaa; }
.arr-down { width: 0; height: 0; border: 4px solid transparent; border-bottom: 0; border-top: 4px solid #aaa; }
.arr-left { width: 0; height: 0; border: 4px solid transparent; border-left: 0; border-right: 4px solid #aaa; }
.arr-right { width: 0; height: 0; border: 4px solid transparent; border-right: 0; border-left: 4px solid #aaa; }

.panel { width: 276px; flex: none; box-sizing: border-box; border-left: 1px solid #cbcbcb; border-right: 1px solid #cbcbcb; padding-left: 19px; padding-right: 12px; }
.plabel { font-weight: 700; font-size: 13.75px; line-height: 18px; color: #444; letter-spacing: .2px; }
.mt1 { margin-top: 1px; } .mt2 { margin-top: 2px; } .mt9 { margin-top: 9px; } .mt10 { margin-top: 10px; } .mt11 { margin-top: 11px; } .mt12 { margin-top: 12px; } .mt14 { margin-top: 14px; } .mt16 { margin-top: 16px; } .mt20 { margin-top: 20px; }
.pselect { box-sizing: border-box; background: #fff; border: 1px solid #cfcfcf; border-radius: 2px; display: flex; align-items: center; justify-content: space-between; }
.fill-sel { height: 27px; padding: 0 6px 1px 4px; font-size: 14px; }
.pdiv { height: 1px; background: #cbcbcb; }
.bstyle-row { display: flex; align-items: center; height: 26px; position: relative; }
.border-sel { width: 115px; height: 26px; padding: 0 6px 0 12px; }
.line { width: 75px; height: 1px; border-top: 1.500px solid #444; }
.color-lbl { margin-left: 33px; color: #444; padding-bottom: 2px; }
.color-btn { margin-left: 5px; width: 57px; height: 26px; box-sizing: border-box; background: #fff; border: 1px solid #cfcfcf; border-radius: 2px; display: flex; align-items: center; padding: 1px; gap: 5px; }
.swatch { width: 40px; height: 23px; background: #000; display: block; }
.ptext { font-size: 13.75px; line-height: 19px; white-space: nowrap; }
.bicons { display: grid; grid-template-columns: repeat(6, 16px); column-gap: 14.300px; row-gap: 19px; padding-left: 5px; }
.spin { box-sizing: border-box; background: #fff; border: 1px solid #cfcfcf; border-radius: 2px; display: flex; align-items: center; justify-content: flex-end; font-size: 14px; }
.indent { width: 75px; height: 26px; padding-right: 7px; }
.angle { width: 74px; height: 27px; padding-right: 7px; }
.spin-btns { display: flex; flex-direction: column; gap: 8px; margin-left: 10px; }
.angle-row { display: flex; align-items: center; gap: 11px; }
.chk-row { display: flex; align-items: center; gap: 11px; height: 18px; }
.chk { width: 17px; height: 18px; box-sizing: border-box; border: 1px solid #cfcfcf; border-radius: 2px; background: #fff; display: flex; align-items: center; justify-content: center; }
.off { color: #aaa; }
.off .chk { background: #f5f5f5; border-color: #e2e2e2; }
.cond { display: flex; align-items: center; padding-left: 4px; height: 18px; }
.cond span { margin-left: 8px; margin-right: 8px; }

.right-strip { width: 49px; flex: none; position: relative; background: #f1f1f1; }
.rs-active { position: absolute; left: 0; right: 0; top: 19px; height: 37px; background: #7e858c; display: flex; align-items: center; justify-content: center; }
.rs { position: absolute; left: 15px; }
.r1 { top: 78px; }
.r2 { top: 123px; }
.r3 { top: 171px; }
.r4 { top: 219px; }
.r5 { top: 266px; left: 17px; }
.r6 { top: 312px; left: 14px; }
.r7 { top: 360px; }
.r8 { top: 408px; }
.r9 { top: 454px; left: 14px; }
.ta { display: flex; flex-direction: column; align-items: center; color: #a3a3a3; font-size: 19px; line-height: 17px; font-weight: 400; width: 21px; }
.ta svg { margin-top: 3px; }

.status { height: 29px; flex: none; box-sizing: border-box; border-top: 1px solid #cbcbcb; display: flex; align-items: stretch; position: relative; background: #f1f1f1; }
.nav { width: 85px; box-sizing: border-box; border-right: 1px solid #cbcbcb; display: flex; align-items: center; padding-left: 23px; gap: 21px; }
.sheet-actions { width: 75px; display: flex; align-items: center; padding-left: 16px; gap: 16px; box-sizing: border-box; }
.sheet-tab { width: 72px; box-sizing: border-box; background: #fff; border-top: 5px solid #4a7c5e; border-left: 1px solid #cbcbcb; border-right: 1px solid #cbcbcb; text-align: center; font-weight: 700; font-size: 13.75px; line-height: 19px; color: #444; }
.zm { align-self: center; }
.zp { align-self: center; margin-right: 56px; }
.zoom-text { align-self: center; font-weight: 700; font-size: 13.75px; padding: 0 21px; white-space: nowrap; }

.taskbar { height: 6px; flex: none; display: flex; background: #1f2328; }
.tk { display: block; height: 6px; }
.t1 { width: 60px; background: #1f2328; }
.t2 { width: 360px; background: #e8e8e8; }
.t3 { width: 131px; background: #1f2328; }
.t4 { width: 51px; background: #9b1c1f; }
.t5 { width: 378px; background: #23272c; }
.t6 { width: 60px; background: #45494e; }
.t7 { flex: 1; background: #1f2328; }

.dialog { position: absolute; left: 791px; top: 389px; width: 341px; height: 291px; background: #fff; border-radius: 5px; box-shadow: 0 4px 18px rgba(0, 0, 0, .3); overflow: hidden; }
.dlg-head { height: 43px; box-sizing: border-box; background: #f1f1f1; border-bottom: 1px solid #cbcbcb; display: flex; align-items: center; justify-content: center; font-weight: 700; font-size: 14px; letter-spacing: .5px; position: relative; padding-top: 3px; }
.dlg-x { position: absolute; right: 18px; top: 15px; }
.dlg-body { padding-left: 25px; width: 313px; box-sizing: border-box; }
.dlbl { margin-top: 10px; height: 18px; line-height: 19px; font-size: 13.75px; }
.dinput { box-sizing: border-box; width: 288px; height: 28px; margin-top: 2px; background: #fff; border: 1px solid #cfcfcf; border-radius: 2px; display: flex; align-items: center; justify-content: space-between; padding: 0 3px 1px 4px; font-size: 13.75px; }
.dinput.first { margin-top: 1px; padding-bottom: 0; }
.dinput.focus { border-color: #777; }
.caret { display: inline-block; width: 1px; height: 15px; background: #222; vertical-align: -3px; }
.dbtns { display: flex; gap: 12px; margin-top: 29px; padding-left: 31px; }
.btn { width: 108px; height: 28px; box-sizing: border-box; text-align: center; font-weight: 700; font-size: 13.75px; line-height: 24px; }
.ok { background: #7e858c; color: #fff; border: 1px solid #7e858c; }
.cancel { background: #fff; color: #444; border: 1px solid #cfcfcf; }
</style>
